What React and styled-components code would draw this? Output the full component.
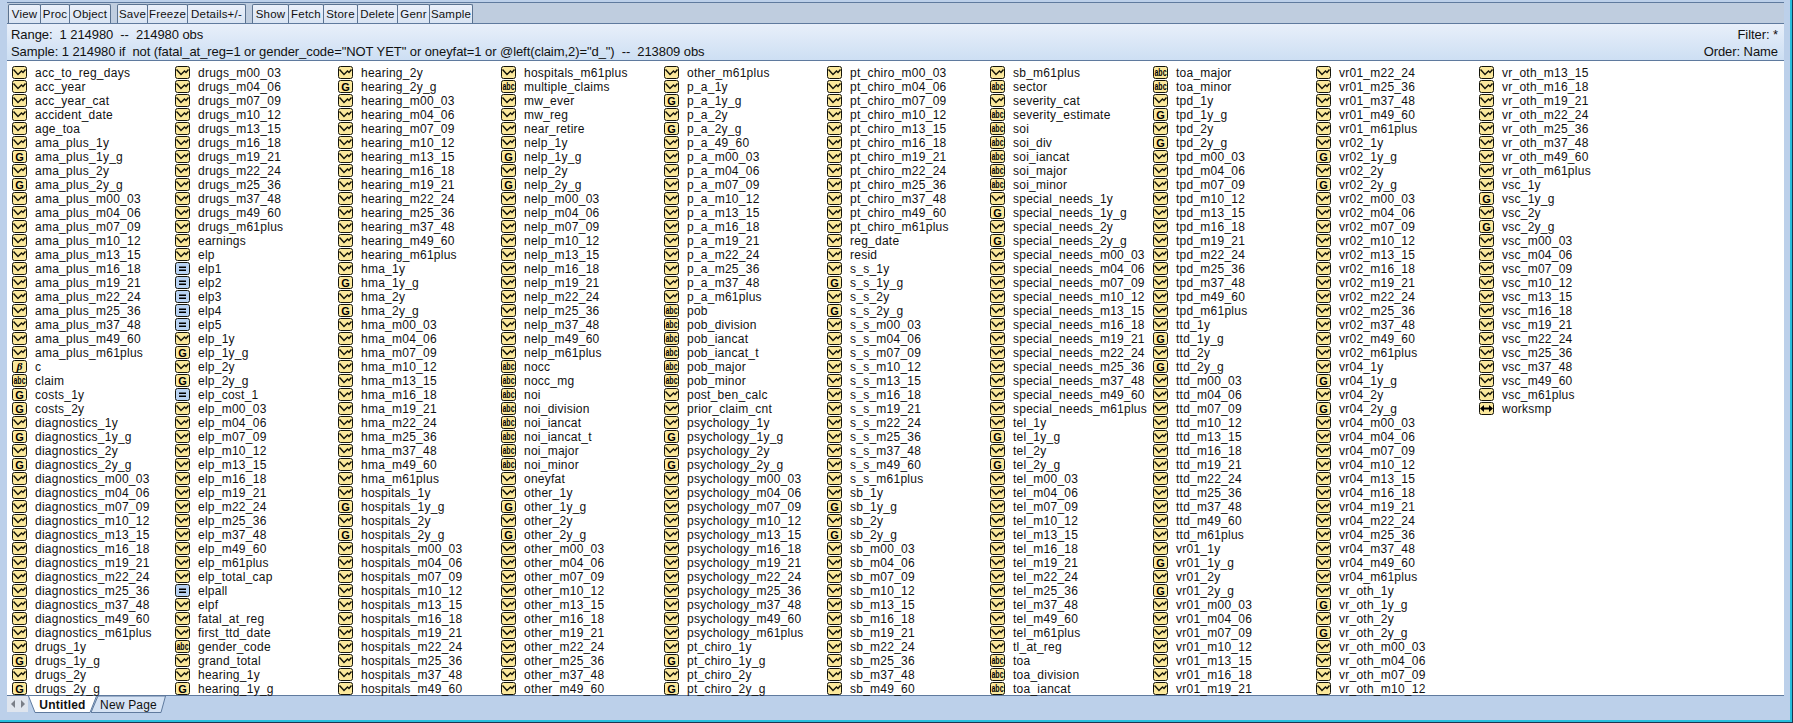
import styled, { createGlobalStyle } from "styled-components";

const GlobalStyle = createGlobalStyle`
  html, body {
    margin: 0;
    padding: 0;
    background: #bcd0ea;
    overflow: hidden;
  }
`;

const MONTHS = ["m00_03", "m04_06", "m07_09", "m10_12", "m13_15", "m16_18", "m19_21", "m22_24", "m25_36", "m37_48", "m49_60", "m61plus"];
const YEARS = ["1y", "1y_g", "2y", "2y_g"];
const months = (p, from = 0, to = 12) => MONTHS.slice(from, to).map((m) => `${p}_${m}`);
const years = (p) => YEARS.map((y) => `${p}_${y}`);
const group = (p) => [...years(p), ...months(p)];

const SERIES = [
  "acc_to_reg_days", "acc_year", "acc_year_cat", "accident_date", "age_toa",
  ...group("ama_plus"),
  "c", "claim", "costs_1y", "costs_2y",
  ...group("diagnostics"),
  ...years("drugs"), ...months("drugs"),
  "earnings", "elp", "elp1", "elp2", "elp3", "elp4", "elp5",
  ...years("elp"), "elp_cost_1", ...months("elp"),
  "elp_total_cap", "elpall", "elpf", "fatal_at_reg", "first_ttd_date", "gender_code", "grand_total",
  ...group("hearing"),
  ...group("hma"),
  ...group("hospitals"),
  "multiple_claims", "mw_ever", "mw_reg", "near_retire",
  ...group("nelp"),
  "nocc", "nocc_mg", "noi", "noi_division", "noi_iancat", "noi_iancat_t", "noi_major", "noi_minor", "oneyfat",
  ...group("other"),
  ...years("p_a"), "p_a_49_60", ...months("p_a", 0, 10), "p_a_m61plus",
  "pob", "pob_division", "pob_iancat", "pob_iancat_t", "pob_major", "pob_minor", "post_ben_calc", "prior_claim_cnt",
  ...group("psychology"),
  ...group("pt_chiro"),
  "reg_date", "resid",
  ...group("s_s"),
  ...group("sb"),
  "sector", "severity_cat", "severity_estimate", "soi", "soi_div", "soi_iancat", "soi_major", "soi_minor",
  ...group("special_needs"),
  ...group("tel"),
  "tl_at_reg", "toa", "toa_division", "toa_iancat", "toa_major", "toa_minor",
  ...group("tpd"),
  ...group("ttd"),
  ...group("vr01"),
  ...group("vr02"),
  ...group("vr04"),
  ...group("vr_oth"),
  ...group("vsc"),
  "worksmp",
];

// SERIES keeps the groups together, EViews lists them sorted by plain name
const NAMES = [...SERIES].sort((a, b) => (a < b ? -1 : a > b ? 1 : 0));

const ALPHA = new Set([
  "claim", "gender_code", "multiple_claims", "nocc", "nocc_mg", "noi", "noi_division", "noi_iancat", "noi_iancat_t",
  "noi_major", "noi_minor", "pob", "pob_division", "pob_iancat", "pob_iancat_t", "pob_major", "pob_minor", "sector",
  "severity_estimate", "soi", "soi_div", "soi_iancat", "soi_major", "soi_minor", "toa", "toa_division", "toa_iancat",
  "toa_major", "toa_minor",
]);
const EQUATIONS = new Set(["elp1", "elp2", "elp3", "elp4", "elp5", "elp_cost_1", "elpall"]);

const kindOf = (name) => {
  if (name === "c") return "coef";
  if (name === "worksmp") return "link";
  if (ALPHA.has(name)) return "alpha";
  if (EQUATIONS.has(name)) return "equation";
  if (name === "costs_1y" || name === "costs_2y" || name.endsWith("_g")) return "group";
  return "series";
};

const FIRST_BAR = [["View", 33], ["Proc", 30], ["Object", 42]];
const SECOND_BAR = [["Save", 31], ["Freeze", 41], ["Details+/-", 59]];
const THIRD_BAR = [["Show", 37], ["Fetch", 36], ["Store", 35], ["Delete", 41], ["Genr", 33], ["Sample", 44]];

const ObjectIcon = ({ kind }) => {
  const fill = kind === "equation" ? "#b9d3f3" : "#fbe89c";
  return (
    <IconSvg viewBox="0 0 15 13">
      <rect x="0.5" y="0.5" width="14" height="12" rx="2" fill={fill} stroke="#14140a" />
      {kind === "series" && <polyline points="1.5,3.5 6,8.5 9.5,5 11,6.5 13.5,3.5" fill="none" stroke="#14140a" strokeWidth="1.4" />}
      {kind === "group" && <text x="7.5" y="10.5" textAnchor="middle" fontFamily="Liberation Sans, sans-serif" fontWeight="700" fontSize="11" fill="#000">G</text>}
      {kind === "coef" && <text x="7.5" y="10" textAnchor="middle" fontFamily="Liberation Serif, serif" fontStyle="italic" fontWeight="700" fontSize="11" fill="#000">β</text>}
      {kind === "alpha" && (
        <g transform="translate(7.5 10) scale(0.7 1)">
          <text textAnchor="middle" fontFamily="Liberation Sans, sans-serif" fontWeight="700" fontSize="10" fill="#000">abc</text>
        </g>
      )}
      {kind === "equation" && <path d="M4 4.5h7v1.5H4zM4 7.5h7v1.5H4z" fill="#000" />}
      {kind === "link" && <path d="M1 6.5l4-3.5v2.5h5V3l4 3.5-4 3.5V7.5H5V10z" fill="#000" />}
    </IconSvg>
  );
};

const ButtonGroup = ({ items }) => (
  <Group>
    {items.map(([label, width]) => (
      <BarButton key={label} $width={width}>{label}</BarButton>
    ))}
  </Group>
);

export default function App() {
  return (
    <>
      <GlobalStyle />
      <Frame>
        <Inner>
          <Toolbar>
            <ButtonGroup items={FIRST_BAR} />
            <ButtonGroup items={SECOND_BAR} />
            <ButtonGroup items={THIRD_BAR} />
          </Toolbar>
          <InfoBar>
            <InfoLeft>
              <InfoLine>{"Range:  1 214980  --  214980 obs"}</InfoLine>
              <InfoLine>{'Sample: 1 214980 if  not (fatal_at_reg=1 or gender_code="NOT YET" or oneyfat=1 or @left(claim,2)="d_")  --  213809 obs'}</InfoLine>
            </InfoLeft>
            <InfoRight>
              <InfoLine>Filter: *</InfoLine>
              <InfoLine>Order: Name</InfoLine>
            </InfoRight>
          </InfoBar>
          <List>
            {NAMES.map((name) => (
              <Row key={name}>
                <ObjectIcon kind={kindOf(name)} />
                <Name>{name}</Name>
              </Row>
            ))}
          </List>
          <TabBar>
            <Scroller>
              <svg width="6" height="8" viewBox="0 0 6 8"><path d="M5 0v8L1 4z" fill="#7a7f88" /></svg>
              <svg width="6" height="8" viewBox="0 0 6 8"><path d="M1 0v8l4-4z" fill="#7a7f88" /></svg>
            </Scroller>
            <Tab $active $width={69}>
              <TabShape viewBox="0 0 69 17" preserveAspectRatio="none">
                <path d="M0.5 0L7 16.5H62L68.5 0" fill="#fff" stroke="#5f7a9e" />
              </TabShape>
              <TabLabel $active>Untitled</TabLabel>
            </Tab>
            <Tab $width={75} $overlap>
              <TabShape viewBox="0 0 75 17" preserveAspectRatio="none">
                <path d="M0 16.5L2 16.5H70L74.5 0H7z" fill="#d6e3f4" stroke="#5f7a9e" />
              </TabShape>
              <TabLabel>New Page</TabLabel>
            </Tab>
          </TabBar>
        </Inner>
      </Frame>
    </>
  );
}

const Frame = styled.div`
  width: 1793px;
  height: 723px;
  box-sizing: border-box;
  border-right: 1px solid #1c3550;
  border-bottom: 1px solid #1c3550;
  font-family: "Liberation Sans", Arial, sans-serif;
  color: #111;
`;

const Inner = styled.div`
  height: 100%;
  box-sizing: border-box;
  padding: 2px 6px 0 7px;
  border-right: 2px solid #27bfdc;
  border-bottom: 2px solid #27bfdc;
  display: flex;
  flex-direction: column;
  background: #bcd0ea;
`;

const Toolbar = styled.div`
  height: 20px;
  flex: none;
  display: flex;
  gap: 7px;
  padding-left: 1px;
  align-items: flex-end;
  background: #bfcddf;
  border-top: 1px solid #5f7a9e;
  border-bottom: 1px solid #5f7a9e;
`;

const Group = styled.div`
  display: flex;
  height: 19px;
`;

const BarButton = styled.div`
  width: ${(p) => p.$width}px;
  box-sizing: border-box;
  display: flex;
  align-items: center;
  justify-content: center;
  font-size: 11.5px;
  letter-spacing: 0.2px;
  background: linear-gradient(#eaf0fa, #d9e4f3);
  border: 1px solid #5a7290;
  border-bottom: none;
  border-radius: 2px 2px 0 0;
  margin-right: -1px;
`;

const InfoBar = styled.div`
  height: 37px;
  flex: none;
  display: flex;
  justify-content: space-between;
  padding: 2px 6px 0 4px;
  box-sizing: border-box;
  background: linear-gradient(#e8effa, #cddff3);
  border-bottom: 1px solid #5f7a9e;
`;

const InfoLeft = styled.div`
  display: flex;
  flex-direction: column;
`;

const InfoRight = styled(InfoLeft)`
  align-items: flex-end;
`;

const InfoLine = styled.div`
  height: 17px;
  line-height: 17px;
  font-size: 13px;
  letter-spacing: -0.07px;
  white-space: pre;
`;

const List = styled.div`
  height: 635px;
  flex: none;
  box-sizing: border-box;
  padding: 4px 0 0 5px;
  background: #fff;
  border-bottom: 1px solid #5f7a9e;
  display: grid;
  grid-auto-flow: column;
  grid-template-rows: repeat(45, 14px);
  grid-auto-columns: 163px;
`;

const Row = styled.div`
  display: flex;
  align-items: center;
  height: 14px;
  white-space: nowrap;
`;

const IconSvg = styled.svg`
  width: 15px;
  height: 13px;
  flex: none;
  display: block;
`;

const Name = styled.span`
  margin-left: 8px;
  padding-top: 2px;
  font-size: 12px;
  line-height: 14px;
  letter-spacing: 0.25px;
`;

const TabBar = styled.div`
  height: 17px;
  display: flex;
  flex: none;
`;

const Scroller = styled.div`
  width: 21px;
  height: 16px;
  flex: none;
  display: flex;
  align-items: center;
  justify-content: center;
  gap: 4px;
  background: #dfe5ee;
`;

const Tab = styled.div`
  position: relative;
  width: ${(p) => p.$width}px;
  height: 17px;
  flex: none;
  display: flex;
  align-items: center;
  justify-content: center;
  margin-left: ${(p) => (p.$overlap ? "-6px" : "0")};
  z-index: ${(p) => (p.$active ? 2 : 1)};
`;

const TabShape = styled.svg`
  position: absolute;
  inset: 0;
  width: 100%;
  height: 100%;
`;

const TabLabel = styled.span`
  position: relative;
  font-size: 12px;
  letter-spacing: 0.2px;
  font-weight: ${(p) => (p.$active ? 700 : 400)};
`;
